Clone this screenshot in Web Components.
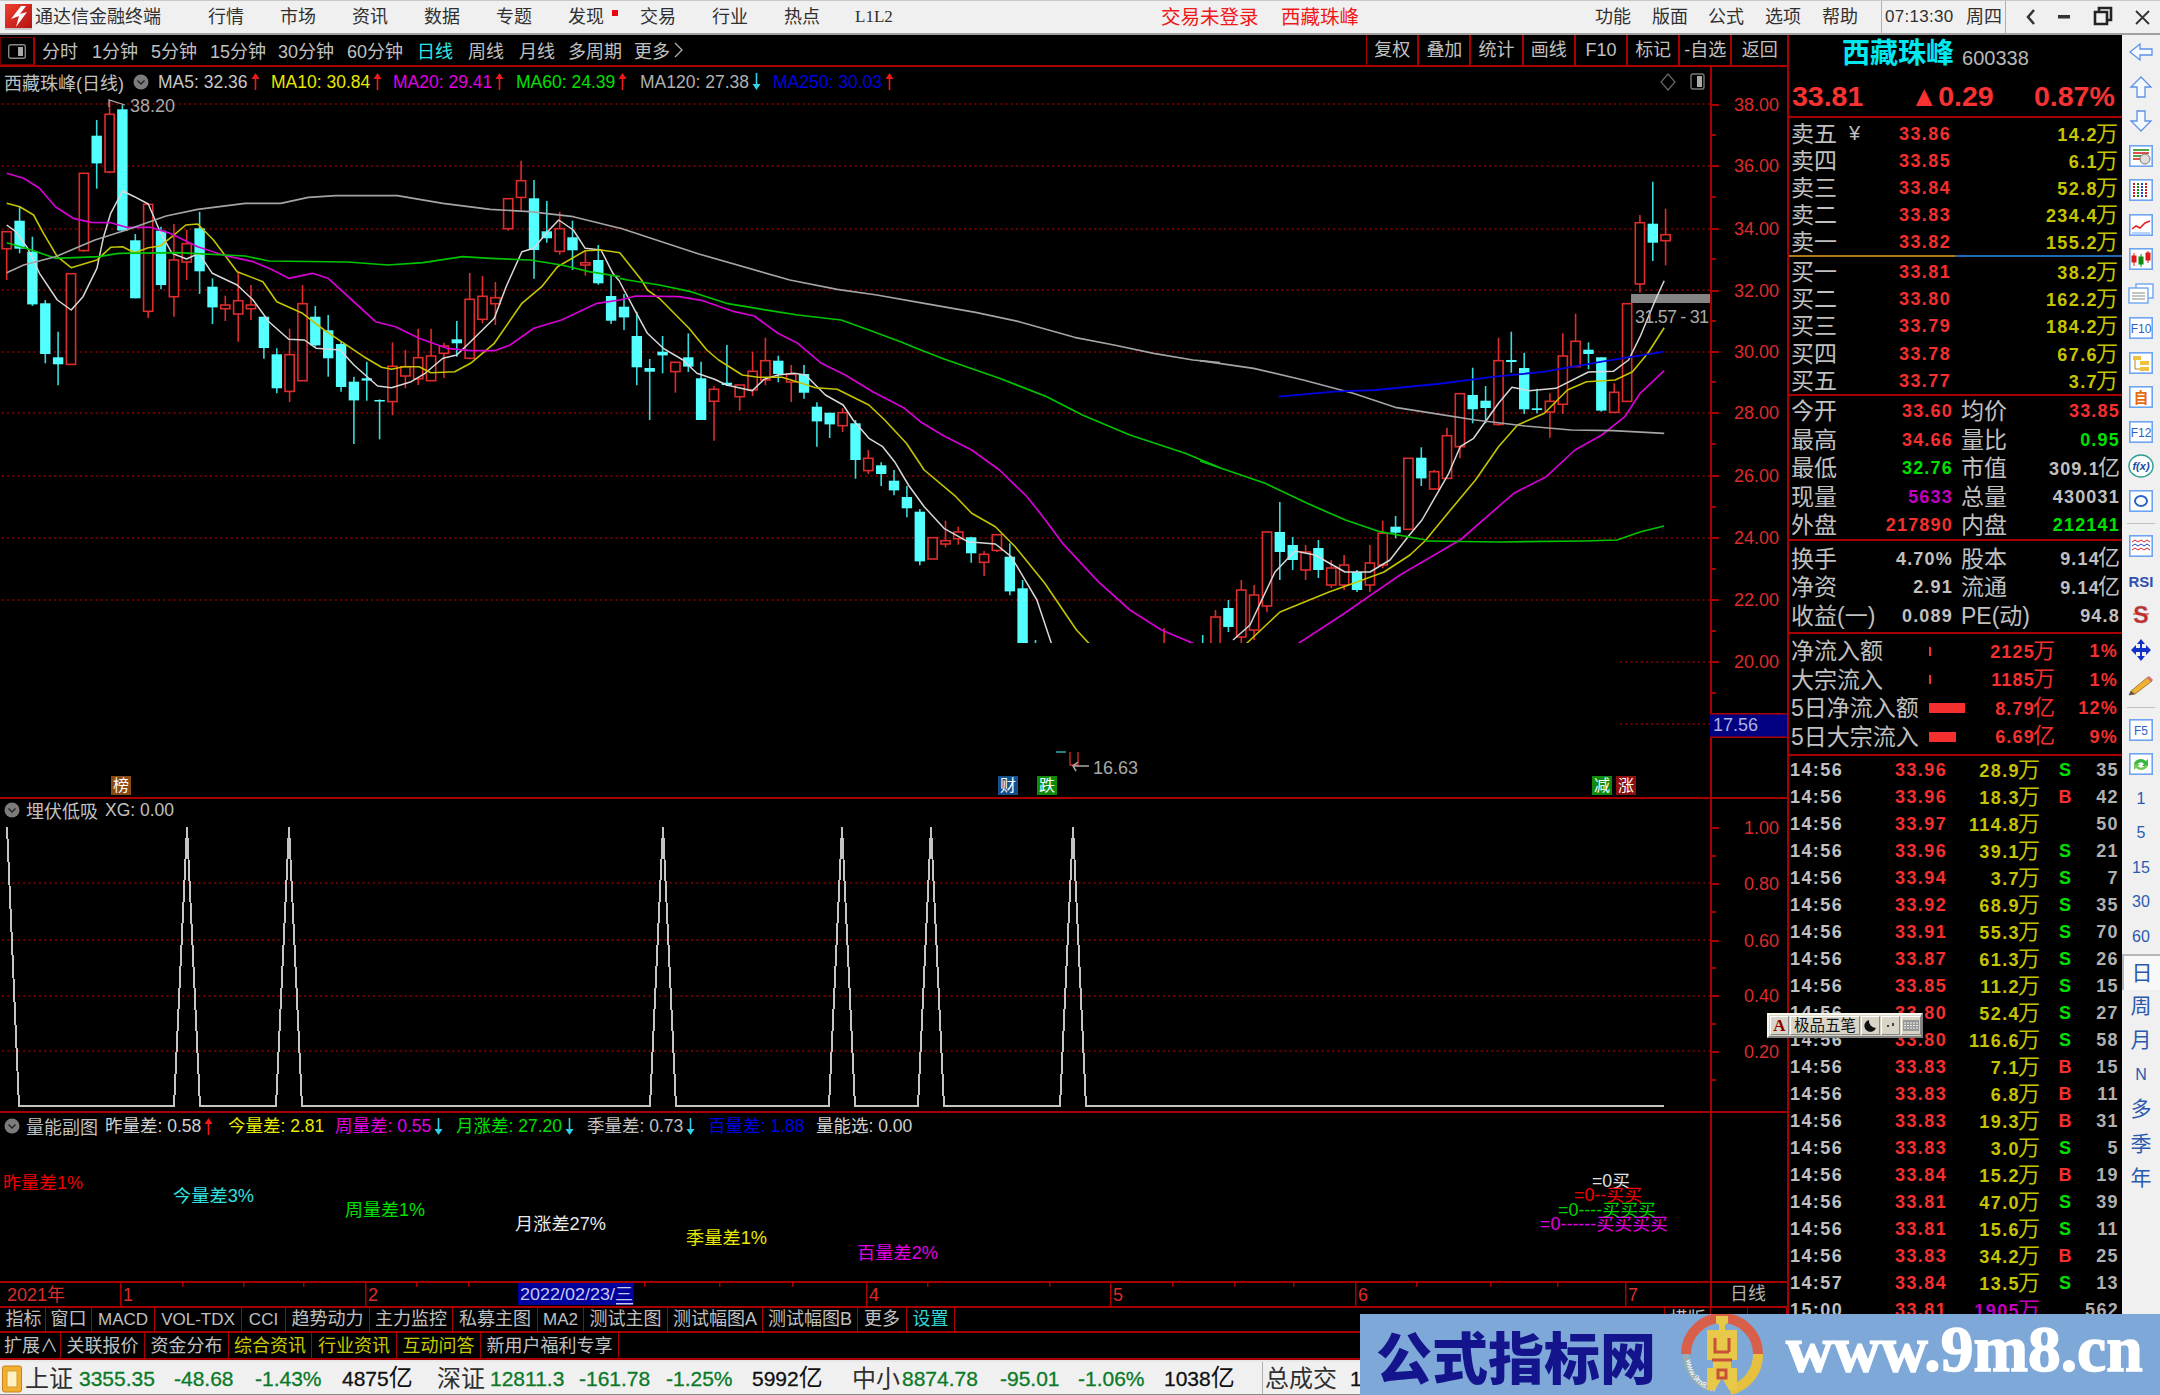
<!DOCTYPE html>
<html lang="zh"><head><meta charset="utf-8"><title>通达信金融终端</title>
<style>
html,body{margin:0;padding:0;background:#000;overflow:hidden}
body{font-family:"Liberation Sans","Noto Sans CJK SC",sans-serif;font-size:18px;color:#c0c0c0}
</style></head>
<body>
<tdx-app>
  <title-bar slot="title"></title-bar>
  <div slot="left" style="display:contents">
    <tool-bar></tool-bar>
    <chart-pane style="--h:732px">
      <info-row slot="head" name="西藏珠峰(日线)" start="4" gap="8" icon="after">
        <ma-val w="113" c="#c8c8c8" a="up">MA5: 32.36</ma-val>
        <ma-val w="122" c="#e8e800" a="up">MA10: 30.84</ma-val>
        <ma-val w="123" c="#e000e0" a="up">MA20: 29.41</ma-val>
        <ma-val w="124" c="#00e000" a="up">MA60: 24.39</ma-val>
        <ma-val w="133" c="#b0b0b0" a="down">MA120: 27.38</ma-val>
        <ma-val w="125" c="#0000e0" a="up">MA250: 30.03</ma-val>
      </info-row>
      <price-plot slot="plot"></price-plot>
      <axis-scale slot="axis" top="67" h="730" labels="105:38.00,166:36.00,229:34.00,291:32.00,352:30.00,413:28.00,476:26.00,538:24.00,600:22.00,662:20.00" minor="135,197,259,321,382,444,507,569,631,693,724"></axis-scale>
    </chart-pane>
    <chart-pane style="--h:314px">
      <info-row slot="head" name="埋伏低吸" start="26" gap="6" icon="before" pad="27" pb="5">
        <ma-val c="#c0c0c0">XG: 0.00</ma-val>
      </info-row>
      <xg-plot slot="plot"></xg-plot>
      <axis-scale slot="axis" top="799" h="312" labels="828:1.00,884:0.80,941:0.60,996:0.40,1052:0.20" minor="856,912,968,1024,1080"></axis-scale>
    </chart-pane>
    <chart-pane style="--h:170px">
      <info-row slot="head" name="量能副图" start="26" gap="6" icon="before" pad="26">
        <ma-val w="123" c="#d0d0d0" a="up">昨量差: 0.58</ma-val>
        <ma-val w="107" c="#e8e800">今量差: 2.81</ma-val>
        <ma-val w="121" c="#e000e0" a="down">周量差: 0.55</ma-val>
        <ma-val w="131" c="#00e000" a="down">月涨差: 27.20</ma-val>
        <ma-val w="121" c="#c0c0c0" a="down">季量差: 0.73</ma-val>
        <ma-val w="108" c="#0000e0">百量差: 1.88</ma-val>
        <ma-val c="#d0d0d0">量能选: 0.00</ma-val>
      </info-row>
      <vol-plot slot="plot"></vol-plot>
      <axis-scale slot="axis" top="1113" h="168" labels="" minor=""></axis-scale>
    </chart-pane>
    <time-axis></time-axis>
    <tab-strip style="--h:25px">
      <tab-cell w="44">指标</tab-cell><tab-cell w="46">窗口</tab-cell><tab-cell w="63">MACD</tab-cell><tab-cell w="87">VOL-TDX</tab-cell><tab-cell w="44">CCI</tab-cell><tab-cell w="84">趋势动力</tab-cell><tab-cell w="83">主力监控</tab-cell><tab-cell w="85">私募主图</tab-cell><tab-cell w="46">MA2</tab-cell><tab-cell w="84">测试主图</tab-cell><tab-cell w="95">测试幅图A</tab-cell><tab-cell w="95">测试幅图B</tab-cell><tab-cell w="49">更多</tab-cell><tab-cell w="48" c="#30d8d8">设置</tab-cell>
      <tab-cell w="47" style="margin-left:auto" first>横版</tab-cell><tab-cell w="37"></tab-cell><tab-cell w="39"></tab-cell>
    </tab-strip>
    <tab-strip style="--h:27px;--pt:2px">
      <tab-cell w="59">扩展∧</tab-cell><tab-cell w="84">关联报价</tab-cell><tab-cell w="84">资金分布</tab-cell><tab-cell w="83" c="#c8c800">综合资讯</tab-cell><tab-cell w="85" c="#c8c800">行业资讯</tab-cell><tab-cell w="84" c="#c8c800">互动问答</tab-cell><tab-cell w="138">新用户福利专享</tab-cell>
    </tab-strip>
  </div>
  <quote-panel slot="quote"></quote-panel>
  <side-rail slot="rail"></side-rail>
  <status-strip slot="status"></status-strip>
  <ime-bar slot="over"></ime-bar>
  <water-mark slot="over"></water-mark>
</tdx-app>
<script>
function def(name,css,html){
  customElements.define(name,class extends HTMLElement{
    connectedCallback(){
      if(this.shadowRoot)return;
      const s=this.attachShadow({mode:'open'});
      s.innerHTML='<style>'+css+'</style>'+(typeof html==='function'?html(this):html);
    }
  });
}
const RED='#a80000';
const chevron='<svg width="16" height="16" viewBox="0 0 16 16" style="display:block;flex:none"><circle cx="8" cy="8" r="7.5" fill="#7c7c7c"/><path d="M4.5 6.5 8 10l3.500-3.500" fill="none" stroke="#222" stroke-width="1.400"/></svg>';

def('tdx-app',`:host{display:grid;position:relative;width:2160px;height:1395px;overflow:hidden;grid-template-columns:1787px 335px 38px;grid-template-rows:35px 1325px 35px;background:#000}
 .t{grid-column:1/4}.l{display:flex;flex-direction:column;min-width:0}.s{grid-column:1/4}`,
 `<div class="t"><slot name="title"></slot></div><div class="l"><slot name="left"></slot></div><div><slot name="quote"></slot></div><div><slot name="rail"></slot></div><div class="s"><slot name="status"></slot></div><slot name="over"></slot>`);

def('title-bar',`:host{display:flex;align-items:center;height:35px;box-sizing:border-box;background:#f0f0f0;border-top:1px solid #c8c8c8;border-bottom:2px solid #a0a0a0;color:#303030;font-size:18px;line-height:24px;white-space:nowrap}
 span{flex:none}.m{width:36px;text-align:center}.g{margin-left:36px}.r{color:#f01818;font-size:19.500px}
 svg{flex:none;display:block}.sep{width:1px;height:33px;background:#b0b0b0;flex:none}`,
 ()=>{
  const ms=['行情','市场','资讯','数据','专题','发现'];
  return `<svg width="27" height="26" viewBox="0 0 27 26" style="margin-left:5px"><defs><linearGradient id="lg" x1="0" y1="0" x2="1" y2="1"><stop offset="0" stop-color="#f04030"/><stop offset="1" stop-color="#b01010"/></linearGradient></defs><rect width="27" height="26" fill="url(#lg)"/><path d="M16 2 6 15l8-3-3 11 11-15-7 2 6-8z" fill="#fff"/><path d="M0 24h27v2H0z" fill="#c8c8c8"/></svg>
  <span style="margin-left:3px;width:173px">通达信金融终端</span>`+
  ms.map((m,i)=>`<span class="m" style="margin-left:${i?36:0}px">${m}</span>`).join('')+
  `<span style="width:6px;height:6px;background:#f00010;margin:-8px 0 0 8px"></span><span class="m" style="margin-left:22px">交易</span><span class="m g">行业</span><span class="m g">热点</span>
  <span style="margin-left:35px;font-size:17px;width:37px;font-family:'Liberation Serif'">L1L2</span>
  <span class="r" style="margin-left:269px;width:120px">交易未登录</span><span class="r">西藏珠峰</span>
  <span class="m" style="margin-left:236px">功能</span><span class="m" style="margin-left:21px">版面</span><span class="m" style="margin-left:20px">公式</span><span class="m" style="margin-left:21px">选项</span><span class="m" style="margin-left:21px">帮助</span>
  <span class="sep" style="margin-left:23px"></span><span style="margin-left:3px;width:78px;font-size:17px;letter-spacing:.3px">07:13:30</span><span class="m" style="margin-left:3px">周四</span><span class="sep" style="margin-left:3px"></span>
  <svg width="157" height="24" viewBox="2 0 157 24"><path d="M30 5 24 12l6 7" fill="none" stroke="#333" stroke-width="2.500"/><rect x="54" y="10" width="12" height="3.500" fill="#333"/><path d="M91 7h12v12H91zM95 7V3h12v12h-4" fill="none" stroke="#222" stroke-width="2.600"/><path d="M132 6l13 13M145 6l-13 13" stroke="#333" stroke-width="1.800"/></svg>`;
 });

def('tool-bar',`:host{display:flex;align-items:center;height:32px;box-sizing:border-box;border-bottom:2px solid ${RED};background:#000;font-size:18px;color:#c0c0c0;white-space:nowrap}
 .box{width:35px;height:28px;margin-top:2px;box-sizing:border-box;border:1px solid #700000;border-right:2px solid ${RED};display:flex;align-items:center;justify-content:center;flex:none}
 span{flex:none}.b{display:flex;height:100%;margin-left:auto;border-left:1px solid ${RED}}.b span{width:52.200px;text-align:center;border-right:2px solid ${RED};box-sizing:border-box;line-height:30px}.b span:last-child{width:54.600px;border-right:0}`,
 ()=>{
  const it=[['分时',42,35],['1分钟',92,45],['5分钟',151,45],['15分钟',210,55],['30分钟',278,55],['60分钟',347,56],['日线',417,36,'#30e8e8'],['周线',468,36],['月线',519,36],['多周期',568,54],['更多',634,36]];
  let h='',p=35;
  it.forEach(a=>{h+=`<span style="margin-left:${a[1]-p}px;width:${a[2]}px;${a[3]?'color:'+a[3]:''}">${a[0]}</span>`;p=a[1]+a[2];});
  h+=`<svg width="14" height="20" viewBox="0 0 14 20" style="margin-left:2px"><path d="M3 3l7 7-7 7" fill="none" stroke="#b0b0b0" stroke-width="1.300"/></svg>`;
  return `<div class="box"><svg width="18" height="15" viewBox="0 0 18 15"><rect x=".7" y=".7" width="16.600" height="13.600" rx="2" fill="none" stroke="#888" stroke-width="1.400"/><rect x="10" y="3" width="5" height="9" fill="#aaa"/></svg></div>`+h+
  `<div class="b">`+['复权','叠加','统计','画线','F10','标记','-自选','返回'].map(t=>`<span>${t}</span>`).join('')+`</div>`;
 });

def('chart-pane',`:host{display:grid;grid-template-columns:1710px 77px;grid-template-rows:auto 1fr;height:var(--h);box-sizing:border-box;border-bottom:2px solid ${RED};background:#000;overflow:hidden}
 .a{grid-column:2;grid-row:1/3;min-height:0}.h{grid-column:1;grid-row:1}.p{grid-column:1;grid-row:2;min-height:0}`,
 `<div class="h"><slot name="head"></slot></div><div class="p"><slot name="plot"></slot></div><div class="a"><slot name="axis"></slot></div>`);

def('info-row',`:host{display:flex;align-items:center;height:29px;box-sizing:border-box;font-size:17.500px;white-space:nowrap;position:relative}
 .n{flex:none;color:#c0c0c0;font-size:18px}::slotted(*){flex:none}`,
 e=>{
  const s=+e.getAttribute('start'),ic=e.getAttribute('icon'),name=e.getAttribute('name');
  if(e.getAttribute('pad'))e.style.height=e.getAttribute('pad')+'px';
  if(e.getAttribute('pb'))e.style.paddingBottom=e.getAttribute('pb')+'px';
  if(ic==='after'){
   return `<span class="n" style="margin-left:${s}px;width:129px">${name}</span>${chevron}<span style="width:9px;flex:none"></span><slot></slot>
   <svg width="50" height="20" viewBox="0 0 50 20" style="position:absolute;left:1655px;top:5px"><path d="M13 2l7 8-7 8-7-8z" fill="none" stroke="#666" stroke-width="1.200"/><rect x="36" y="2" width="13" height="15" rx="2" fill="none" stroke="#777" stroke-width="1.400"/><rect x="42" y="4" width="5" height="11" fill="#aaa"/></svg>`;
  }
  return `<span style="margin-left:4px;flex:none">${chevron}</span><span class="n" style="margin-left:6px;width:79px">${name}</span><slot></slot>`;
 });

def('ma-val',`:host{display:inline-flex;align-items:center;line-height:24px}svg{display:block;margin-left:3px;flex:none}`,
 e=>{
  const c=e.getAttribute('c'),w=e.getAttribute('w'),a=e.getAttribute('a');
  e.style.color=c; if(w)e.style.width=w+'px';
  let ar='';
  if(a==='up')ar=`<svg width="9" height="19" viewBox="0 0 9 19"><path d="M4.500 1 8.500 7H5.300V18H3.700V7H.5z" fill="#f01818"/></svg>`;
  if(a==='down')ar=`<svg width="9" height="19" viewBox="0 0 9 19"><path d="M4.500 18 8.500 12H5.300V1H3.700V12H.5z" fill="#30d0e8"/></svg>`;
  return `<slot></slot>${ar}`;
 });

def('axis-scale',`:host{display:block;height:100%}svg{display:block;overflow:hidden}text{font-size:18px;fill:#dc2c2c}`,
 e=>{
  const top=+e.getAttribute('top'),h=+e.getAttribute('h'),L=e.getAttribute('labels'),M=e.getAttribute('minor');
  let s=`<rect x="0" y="${top}" width="2" height="${h}" fill="${RED}"/>`;
  if(L)L.split(',').forEach(p=>{const[a,b]=p.split(':');s+=`<rect x="2" y="${a-1}" width="7" height="2" fill="${RED}"/><text x="69" y="${a}" text-anchor="end" dominant-baseline="central">${b}</text>`;});
  if(M)M.split(',').forEach(a=>{s+=`<rect x="2" y="${a-1}" width="4" height="2" fill="${RED}"/>`;});
  if(top===67){s+=`<rect x="0" y="713" width="77" height="25" fill="#000080"/><rect x="0" y="713" width="77" height="1.500" fill="${RED}"/><rect x="0" y="736.500" width="77" height="1.500" fill="${RED}"/><text x="3" y="725" dominant-baseline="central" style="fill:#b0b0e8">17.56</text>`;}
  return `<svg width="77" height="${h}" viewBox="0 ${top} 77 ${h}">${s}</svg>`;
 });

/* ---------- price chart ---------- */
function polyPts(a,fx,fy){let o=[];for(let i=0;i<a.length;i+=2)o.push((fx(a[i])).toFixed(1)+','+(fy(a[i+1])).toFixed(1));return o.join(' ');}
const z7x=v=>v/2.529,z7y=v=>90+v/3,z8x=v=>600+v/2.529,z8y=v=>280+v/3,z9x=v=>1200+v/2.613,z9y=v=>160+v/3,id=v=>v;
const Z7=[['r',425,425,476,570],['c',350,392,476,490],['c',440,485,643,648],['c',630,640,792,820],['c',725,802,823,886],['r',551,551,823,823],['r',250,250,482,485],['c',90,137,220,296],['r',30,73,246,250],['c',45,58,422,422],['c',432,451,625,625],['r',343,343,664,684],['c',410,422,585,598],['r',402,510,620,680],['r',420,461,516,570],['c',365,415,544,612],['c',565,590,652,702],['r',617,645,656,693],['r',545,632,672,755],['r',585,645,656,690],['c',680,680,774,806],['c',775,793,895,910],['r',716,794,904,936],['r',585,641,872,872],['c',648,680,766,770],['c',675,721,805,860],['c',755,762,891,905],['c',860,875,931,1062],['c',815,865,872,932],['c',928,930,934,1048],['r',757,829,935,976],['r',780,830,858,895],['r',716,803,866,885],['r',716,798,872,872],['r',758,768,790,864],['c',693,748,760,800],['r',549,628,805,808],['r',558,619,688,700],['r',576,623,641,705],['r',326,326,416,422],['r',212,272,322,360],['c',270,325,480,566],['c',333,424,445,458],['r',365,416,484,494],['c',392,442,481,540],['r',480,518,525,557],['c',465,510,580,584],['c',555,618,692,702]];
const Z8=[['c',42,80,112,150],['c',95,168,262,316],['c',237,264,275,420],['c',168,215,226,280],['r',247,247,275,338],['c',160,232,260,276],['c',245,295,420,420],['r',318,328,364,482],['c',195,308,315,318],['r',315,315,350,392],['r',215,274,330,348],['r',173,242,300,316],['c',227,242,282,307],['r',255,283,306,366],['c',255,282,338,356],['c',367,380,424,500],['c',398,398,433,474],['r',385,398,437,456],['c',420,430,540,596],['r',510,535,572,582],['c',547,556,582,618],['c',570,602,631,646],['c',618,651,685,712],['c',687,695,844,856],['r',773,773,837,837],['r',722,782,792,802],['r',740,756,776,794],['c',770,772,820,848],['r',813,823,847,888],['r',764,764,811,816],['c',790,830,934,946],['c',900,925,1120,1120]];
const MANUAL={80:['c',640,652,652,660],90:['r',628,660,660,660],92:['c',642,660,660,660],93:['c',635,660,660,660],94:['r',610,617,660,660],95:['c',600,608,627,632],96:['r',580,590,637,650],97:['r',585,595,630,640],98:['r',532,532,606,612],99:['c',502,532,552,580],100:['c',537,545,560,570],101:['r',545,552,570,580],102:['c',540,548,570,578],103:['r',560,568,585,588],104:['r',555,565,585,590],105:['c',570,572,590,592],106:['r',545,563,585,592]};
const Z9=[['r',1082,1120,1215,1225],['c',1068,1100,1118,1135],['r',895,895,1108,1108],['c',862,893,955,978],['r',930,935,987,990],['r',803,827,955,955],['r',701,701,860,895],['c',623,705,748,790],['c',678,722,744,790],['r',533,602,793,797],['c',515,600,606,638],['c',578,624,748,762],['c',686,745,750,760],['r',700,724,756,833],['r',520,588,733,762],['r',461,544,620,620],['c',547,569,582,628],['c',592,592,752,755],['r',670,697,757,757],['r',431,431,724,724],['r',165,188,372,398],['c',65,191,248,303],['r',146,224,242,316]];
function cndl(i,d,fy){
  const x=6.7+12.86*i,[k,wt,bt,bb,wb]=d,t=fy(wt),b1=fy(bt),b2=fy(bb),w=fy(wb);
  const col=k==='r'?'#dc2c2c':'#38dcdc';
  let s=`<path d="M${x.toFixed(1)} ${t.toFixed(1)}V${w.toFixed(1)}" stroke="${col}" stroke-width="1.600"/>`;
  if(k==='r')s+=`<rect x="${(x-4.6).toFixed(1)}" y="${b1.toFixed(1)}" width="9.200" height="${Math.max(b2-b1,1).toFixed(1)}" fill="#000" stroke="#dc2c2c" stroke-width="1.600"/>`;
  else s+=`<rect x="${(x-5.2).toFixed(1)}" y="${b1.toFixed(1)}" width="10.400" height="${Math.max(b2-b1,1.500).toFixed(1)}" fill="#54ffff"/>`;
  return s;
}
const MA={
 ma5:[[z7x,z7y,[17,405,40,425,70,475,100,550,145,630,180,660,210,620,245,535,262,440,280,370,310,303,340,320,375,342,405,425,435,490,472,507,503,490,537,550,600,585,640,630,680,695,730,748,770,750,800,775,860,780,895,825,955,888,990,893,1040,875,1075,850,1120,805,1155,795,1190,755,1250,685,1280,590,1320,485,1350,475,1385,425,1413,390,1450,420,1480,475,1520,480,1550,550,1568,575]],
  [z8x,z8y,[50,6,90,95,120,160,160,205,210,240,245,280,290,298,320,315,385,332,415,298,450,285,490,280,520,285,570,345,615,375,640,420,680,475,715,500,745,545,780,615,820,680,870,745,930,785,1000,792,1040,830,1070,890,1105,960,1150,1120]],
  [id,id,[1233,640,1250,625,1275,572,1295,551,1315,555,1345,572,1370,572,1390,560,1407,538]],
  [z9x,z9y,[540,1135,580,1080,650,940,680,860,715,835,780,730,815,682,860,692,930,685,1015,636,1080,634,1120,600,1150,530,1190,420,1213,362]]],
 ma10:[[z7x,z7y,[17,340,50,350,85,375,110,430,145,500,180,533,245,510,280,472,310,470,340,488,375,473,405,468,435,440,470,405,500,402,540,450,600,545,665,575,700,635,765,670,820,720,870,760,920,800,965,832,990,838,1020,830,1060,830,1090,848,1150,845,1190,820,1250,760,1320,640,1370,590,1410,530,1480,482,1520,480,1568,488]],
  [z8x,z8y,[50,-82,105,0,120,30,150,55,225,145,270,210,300,240,360,285,400,292,460,292,510,310,545,323,600,328,680,375,720,420,775,490,820,570,900,650,940,700,1000,740,1050,800,1125,910,1165,980,1205,1050,1260,1120]],
  [id,id,[1240,650,1247,643,1280,612,1329,592,1357,582,1384,572,1410,555,1426,540]],
  [z9x,z9y,[590,1140,640,1070,720,960,780,860,830,795,900,760,960,690,1010,665,1085,660,1130,635,1170,580,1213,503]]],
 ma20:[[z7x,z7y,[17,250,60,265,100,295,140,350,185,385,230,397,280,398,320,412,380,412,430,430,500,470,570,497,640,515,690,540,730,565,790,550,830,565,890,630,950,695,1000,710,1060,745,1130,775,1190,782,1250,782,1290,765,1350,715,1420,690,1510,640,1568,630]],
  [z8x,z8y,[50,60,90,48,200,50,260,62,340,95,390,108,450,160,500,190,560,250,620,285,690,335,770,385,810,425,870,468,940,510,1010,570,1080,650,1120,710,1170,790,1260,905,1340,990,1420,1050,1500,1090,1560,1120]],
  [id,id,[1290,650,1299,643,1342,615,1400,575,1460,540]],
  [z9x,z9y,[680,1140,820,1000,905,950,980,870,1050,825,1110,770,1150,700,1213,632]]],
 ma60:[[z7x,z7y,[17,458,80,480,140,505,250,500,300,490,450,488,620,498,680,513,880,516,980,525,1070,518,1170,500,1240,505,1340,510,1420,525,1490,545,1568,560]],
  [z8x,z8y,[50,-5,70,0,150,15,230,35,320,70,430,92,500,105,610,120,680,150,760,185,800,205,870,237,1010,295,1130,350,1220,405,1340,465,1480,520,1568,563]],
  [z9x,z9y,[0,903,170,970,280,1030,380,1080,470,1115,590,1140]],
  [id,id,[1426,541,1500,542,1584,541,1617,540,1640,532,1664,526]]],
 ma120:[[z7x,z7y,[17,548,60,525,140,500,240,450,320,420,420,378,500,358,620,340,710,340,780,322,850,317,1005,317,1120,340,1240,358,1340,365,1450,380,1568,415]],
  [z8x,z8y,[50,-156,250,-78,480,0,600,28,700,45,820,70,950,97,1060,125,1200,172,1300,195,1400,220,1500,240,1568,248]],
  [z9x,z9y,[0,602,140,625,270,660,400,700,510,742,610,760,720,780,850,798,970,810,1080,812,1213,820]]],
 ma250:[[z9x,z9y,[205,710,350,695,460,690,620,672,770,650,900,635,1050,605,1213,575]]]
};
const MAC={ma5:['#d8d8d8',1.500],ma10:['#c4c400',1.600],ma20:['#d400d4',1.700],ma60:['#00c400',1.700],ma120:['#a4a4a4',1.700],ma250:['#0000e0',1.800]};

def('price-plot',`:host{display:block;height:100%}svg{display:block}text{font-size:18px;fill:#a8a8a8}.w{fill:#fff;font-size:16px}`,
 ()=>{
  let s=`<defs><clipPath id="cp"><rect x="0" y="96" width="1710" height="547"/></clipPath></defs>`;
  [104,166,229,290,352,413,476,538,600].forEach(y=>s+=`<path d="M2 ${y}H1710" stroke="#900000" stroke-width="1.500" stroke-dasharray="2 3.200"/>`);
  [662,724].forEach(y=>s+=`<path d="M1620 ${y}H1710" stroke="#900000" stroke-width="1.500" stroke-dasharray="2 3.200"/>`);
  s+=`<rect x="1631" y="294" width="80" height="9" fill="#848484"/><g clip-path="url(#cp)">`;
  Z7.forEach((d,i)=>s+=cndl(i,d,z7y));
  Z8.forEach((d,i)=>s+=cndl(48+i,d,z8y));
  for(const k in MANUAL)s+=cndl(+k,MANUAL[k],id);
  Z9.forEach((d,i)=>s+=cndl(107+i,d,z9y));
  for(const k in MA){const[c,w]=MAC[k];MA[k].forEach(seg=>{s+=`<polyline points="${polyPts(seg[2],seg[0],seg[1])}" fill="none" stroke="${c}" stroke-width="${w}" stroke-linejoin="round"/>`;});}
  s+=`</g>`;
  s+=`<text x="1635" y="317" dominant-baseline="central" textLength="74">31.57 - 31</text>`;
  s+=`<path d="M109 107V100l16 5" fill="none" stroke="#a8a8a8" stroke-width="1.300"/><text x="130" y="106" dominant-baseline="central">38.20</text>`;
  s+=`<path d="M1056 752h10" stroke="#38c8c8" stroke-width="1.300"/><path d="M1070 752v13h8M1078 752v13" fill="none" stroke="#dc2c2c" stroke-width="1.300"/><path d="M1089 766h-16m5-4-5 4 3 5" fill="none" stroke="#a8a8a8" stroke-width="1.500"/><text x="1093" y="768" dominant-baseline="central">16.63</text>`;
  [[111,'榜','#8a4a14'],[998,'财','#14508c'],[1037,'跌','#0e8a0e'],[1592,'减','#0e8a0e'],[1616,'涨','#8c1010']].forEach(b=>{
    s+=`<rect x="${b[0]}" y="776" width="20" height="19" fill="${b[2]}"/><text class="w" x="${b[0]+10}" y="785.500" text-anchor="middle" dominant-baseline="central">${b[1]}</text>`;
  });
  return `<svg width="1710" height="701" viewBox="0 96 1710 701">${s}</svg>`;
 });

def('xg-plot',`:host{display:block;height:100%}svg{display:block}`,
 ()=>{
  let s='';
  [883,940,996,1051].forEach(y=>s+=`<path d="M2 ${y}H1710" stroke="#900000" stroke-width="1.500" stroke-dasharray="2 3.300"/>`);
  const pk=[187,289,663,842,931,1073];
  let pts=`7,827 19,1106 `;
  pk.forEach(p=>{pts+=`${p-13},1106 ${p},827 ${p+13},1106 `;});
  pts+=`1664,1106`;
  s+=`<polyline points="${pts}" fill="none" stroke="#c4c4c4" stroke-width="2" shape-rendering="crispEdges"/>`;
  return `<svg width="1710" height="285" viewBox="0 826 1710 285">${s}</svg>`;
 });

def('vol-plot',`:host{display:block;height:100%}svg{display:block}text{font-size:17.500px}`,
 ()=>{
  const L=[['昨量差1%',3,1183,'#f00000',80],['今量差3%',173,1196,'#30e0e0',81],['周量差1%',345,1210,'#00e000',80],['月涨差27%',515,1224,'#e8e8e8',91],['季量差1%',686,1238,'#e8e800',81],['百量差2%',857,1253,'#e000e0',81],
   ['=0买',1592,1181,'#e0e0e0',38],['=0--买买',1574,1195,'#f00000',68],['=0----买买买',1558,1210,'#00d000',98],['=0------买买买买',1540,1224,'#e000e0',128]];
  return `<svg width="1710" height="142" viewBox="0 1139 1710 142">`+L.map(a=>`<text x="${a[1]}" y="${a[2]}" fill="${a[3]}" dominant-baseline="central" textLength="${a[4]}" lengthAdjust="spacingAndGlyphs">${a[0]}</text>`).join('')+`</svg>`;
 });

def('time-axis',`:host{display:block;height:25px;box-sizing:border-box;border-bottom:2px solid ${RED};background:#000}svg{display:block}text{font-size:18px;fill:#dc2c2c}`,
 ()=>{
  let s='';
  [182,243,303,416,468,644,719,792,927,1049,1172,1234,1293,1416,1490,1557].forEach(x=>s+=`<rect x="${x}" y="1283" width="1.500" height="4" fill="${RED}"/>`);
  [[120,'1'],[365,'2'],[866,'4'],[1110,'5'],[1355,'6'],[1625,'7']].forEach(a=>s+=`<rect x="${a[0]}" y="1283" width="1.500" height="24" fill="${RED}"/><text x="${a[0]+3}" y="1295" dominant-baseline="central">${a[1]}</text>`);
  s+=`<text x="7" y="1295" dominant-baseline="central">2021年</text>`;
  s+=`<rect x="518" y="1283" width="116" height="22" fill="#00009c"/><text x="520" y="1294" dominant-baseline="central" textLength="113" lengthAdjust="spacingAndGlyphs" style="fill:#c8c8f0;font-size:17px">2022/02/23/三</text><rect x="616" y="1303" width="17" height="1.500" fill="#c8c8f0"/>`;
  s+=`<rect x="1710" y="1283" width="2" height="24" fill="${RED}"/><text x="1730" y="1294" dominant-baseline="central" style="fill:#b0b0b0" textLength="36">日线</text>`;
  return `<svg width="1787" height="23" viewBox="0 1283 1787 23" style="overflow:visible">${s}</svg>`;
 });

def('tab-strip',`:host{display:flex;height:var(--h);box-sizing:border-box;border-bottom:2px solid ${RED};padding-left:2px;background:#000;white-space:nowrap;overflow:hidden}`,`<slot></slot>`);
def('tab-cell',`:host{display:block;flex:none;box-sizing:border-box;border-right:1.500px solid ${RED};font-size:18px;line-height:23px;padding-top:var(--pt,0);text-align:center;color:#c0c0c0;overflow:hidden}`,
 e=>{e.style.width=e.getAttribute('w')+'px';if(e.getAttribute('c'))e.style.color=e.getAttribute('c');if(e.hasAttribute('first'))e.style.borderLeft='1.5px solid '+RED;
  if(e.textContent==='MACD'||e.textContent==='VOL-TDX'||e.textContent==='CCI'||e.textContent==='MA2')e.style.fontSize='17px';return `<slot></slot>`;});

/* ---------- right panel ---------- */
const Y='#c4c400',R='#f52e2e',G='#00e000',W='#c0c0c0',M='#c000c0';
const num=`font-weight:700;letter-spacing:1.400px`;
def('quote-panel',`:host{display:flex;flex-direction:column;height:1325px;box-sizing:border-box;border-left:2px solid ${RED};background:#000;overflow:hidden;white-space:nowrap}
 .head{height:38px;display:flex;align-items:center;flex:none}
 .nm{margin-left:53px;font-size:28px;line-height:38px;font-weight:700;color:#00e8f0}
 .cd{margin-left:8px;font-size:20px;line-height:30px;color:#b8b8b8;padding-top:8px}
 .pr{height:45px;flex:none;border-bottom:2px solid ${RED};display:flex;align-items:center;color:#f83232;font-size:28.500px;font-weight:700;line-height:30px;box-sizing:border-box;padding-top:2px}
 .q{display:grid;grid-template-columns:108px 60px 159px;padding-left:2px;height:27.200px;align-items:center;line-height:27px;font-size:23px}
 .p{color:${R};font-size:18px;${num}}
 .v{text-align:right;color:${Y};font-size:18px;${num};padding-right:0}
 .v i{font:400 22px/22px "Noto Sans CJK SC";letter-spacing:0;margin-left:-2px}
 .mid{height:2px;flex:none;background:linear-gradient(90deg,#b07818 0 50%,#2068b0 50%);margin-bottom:.5px}
 .sec{flex:none;box-sizing:border-box;border-bottom:2px solid ${RED}}
 .g{display:grid;grid-template-columns:162px 8px 159px;padding-left:2px;height:28.500px;align-items:center;font-size:23px;line-height:28px}
 .c{display:flex;justify-content:space-between;align-items:center}
 .n{font-size:18px;${num};letter-spacing:1.200px}
 .n i{font:400 22px/22px "Noto Sans CJK SC";letter-spacing:0;margin-left:-2px}
 .f{display:grid;grid-template-columns:138px 56px 70px 63px;padding-left:2px;height:28.500px;align-items:center;font-size:23px;line-height:28px}
 .f .n{text-align:right}
 .t{display:grid;grid-template-columns:105px 60px 90px 40px 34px;height:27.030px;align-items:center;padding-left:1px;line-height:27px;font-size:18px;${num}}
 .t>*:nth-child(3){text-align:right;padding-right:5px}.t>*:nth-child(4){text-align:center;font-size:18px;letter-spacing:0}.t>*:nth-child(5){text-align:right}
 .t i{font:400 22px/22px "Noto Sans CJK SC";letter-spacing:0;margin-left:-2px}`,
 ()=>{
  const wan=s=>s.replace(/([万亿])/,'<i>$1</i>');
  const q=(a,b,c,ex)=>`<div class="q"><span>${a}${ex||''}</span><span class="p">${b}</span><span class="v">${wan(c)}</span></div>`;
  const g=(a,b,bc,c,d,dc)=>`<div class="g"><div class="c"><span>${a}</span><span class="n" style="color:${bc}">${wan(b)}</span></div><span></span><div class="c"><span>${c}</span><span class="n" style="color:${dc}">${wan(d)}</span></div></div>`;
  const fl=(a,w,h,b,c)=>`<div class="f"><span style="overflow:visible">${a}</span><span style="display:flex;align-items:center"><span style="display:block;width:${w}px;height:${h}px;background:#f52e2e"></span></span><span class="n" style="color:${R}">${wan(b)}</span><span class="n" style="color:${R}">${c}</span></div>`;
  const T=[['14:56','33.96','28.9万','S',35],['14:56','33.96','18.3万','B',42],['14:56','33.97','114.8万','',50],['14:56','33.96','39.1万','S',21],['14:56','33.94','3.7万','S',7],['14:56','33.92','68.9万','S',35],['14:56','33.91','55.3万','S',70],['14:56','33.87','61.3万','S',26],['14:56','33.85','11.2万','S',15],['14:56','33.80','52.4万','S',27],['14:56','33.80','116.6万','S',58],['14:56','33.83','7.1万','B',15],['14:56','33.83','6.8万','B',11],['14:56','33.83','19.3万','B',31],['14:56','33.83','3.0万','S',5],['14:56','33.84','15.2万','B',19],['14:56','33.81','47.0万','S',39],['14:56','33.81','15.6万','S',11],['14:56','33.83','34.2万','B',25],['14:57','33.84','13.5万','S',13],['15:00','33.81','1905万','',562]];
  return `<div class="head"><span class="nm">西藏珠峰</span><span class="cd">600338</span></div>
  <div class="pr"><span style="margin-left:3px;width:118px">33.81</span><span style="width:124px">▲0.29</span><span>0.87%</span></div>
  <div style="height:1.500px;flex:none"></div>
  ${q('卖五','33.86','14.2万','<span style="font-size:20px;margin-left:12px;vertical-align:2px;font-weight:400">¥</span>')}${q('卖四','33.85','6.1万')}${q('卖三','33.84','52.8万')}${q('卖二','33.83','234.4万')}${q('卖一','33.82','155.2万')}
  <div class="mid"></div>
  ${q('买一','33.81','38.2万')}${q('买二','33.80','162.2万')}${q('买三','33.79','184.2万')}${q('买四','33.78','67.6万')}${q('买五','33.77','3.7万')}
  <div style="height:2px;background:${RED};flex:none"></div>
  <div class="sec" style="padding-top:1px">${g('今开','33.60',R,'均价','33.85',R)}${g('最高','34.66',R,'量比','0.95',G)}${g('最低','32.76',G,'市值','309.1亿',W)}${g('现量','5633',M,'总量','430031',W)}${g('外盘','217890',R,'内盘','212141',G)}</div>
  <div class="sec" style="padding-top:3px;padding-bottom:2px">${g('换手','4.70%',W,'股本','9.14亿',W)}${g('净资','2.91',W,'流通','9.14亿',W)}${g('收益(一)','0.089',W,'PE(动)','94.8',W)}</div>
  <div class="sec" style="padding-top:3px;padding-bottom:3px">${fl('净流入额',1.500,9,'2125万','1%')}${fl('大宗流入',1.500,9,'1185万','1%')}${fl('5日净流入额',36,10,'8.79亿','12%')}${fl('5日大宗流入',27,10,'6.69亿','9%')}</div>
  <div>`+T.map(r=>{const mg=r[4]===562;return `<div class="t"><span style="color:${W}">${r[0]}</span><span style="color:${R}">${r[1]}</span><span style="color:${mg?M:Y}">${wan(r[2])}</span><span style="color:${r[3]==='S'?G:R}">${r[3]}</span><span style="color:#b0b0b0">${r[4]}</span></div>`;}).join('')+`</div>`;
 });

/* ---------- side rail ---------- */
def('side-btn',`:host{display:flex;align-items:center;justify-content:center;height:34.500px;flex:none;color:#2a5ab0}svg{display:block}`,`<slot></slot>`);
def('side-rail',`:host{display:flex;flex-direction:column;height:1325px;box-sizing:border-box;background:#f0f0f0;overflow:hidden;width:38px;align-items:center;font-family:"Liberation Sans","Noto Sans CJK SC",sans-serif}
 .sep{height:1px;width:28px;background:#c0c0c0;margin:5px 0;flex:none}
 .nm{font-size:16px;line-height:20px;color:#2a5ab0}.cj{font-size:21px;line-height:24px;color:#2a5ab0}
 .sel{width:38px;box-sizing:border-box;background:#f8f8f8;border-left:2px solid #b8b8b8;border-top:2px solid #b8b8b8;height:36px;display:flex;align-items:center;justify-content:center;margin-bottom:-1.500px}`,
 ()=>{
  const box=i=>`<svg width="24" height="22" viewBox="0 0 24 22"><rect x=".8" y=".8" width="22.400" height="20.400" fill="#fff" stroke="#6ea4f4" stroke-width="1.600"/>${i}</svg>`;
  const ar=d=>`<svg width="28" height="26" viewBox="0 0 28 26"><path d="${d}" fill="#f4f8ff" stroke="#5e90e8" stroke-width="1.300"/></svg>`;
  const tx=t=>box(`<text x="12" y="15.500" text-anchor="middle" font-size="12" fill="#2a62c8">${t}</text>`);
  const lines=(c,y)=>c.map((k,i)=>`<path d="M4 ${y+i*3}h16" stroke="${k}" stroke-width="1.500"/>`).join('');
  const items=[
   ar('M3 13 13 5v5h12v6H13v5z'),ar('M14 3 24 13h-6v10h-8V13H4z'),ar('M14 23 4 13h6V3h8v10h6z'),
   box(lines(['#108a10','#d01818','#108a10','#d01818'],5)+`<circle cx="16" cy="14" r="5" fill="#ddd" stroke="#777"/>`),
   box(`<g stroke-width="2">`+[5,9,13,17].map((x,i)=>`<path d="M${x} 4v14" stroke="${['#d01818','#108a10','#2040c0','#d01818'][i]}" stroke-dasharray="2 1"/>`).join('')+`</g>`),
   box(`<path d="M3 15l4-3 4 2 5-5 5-2" fill="none" stroke="#e02020" stroke-width="1.500"/><path d="M3 19h18" stroke="#6ea4f4"/>`),
   box(`<g stroke="#e01818"><path d="M5 5v13" /><rect x="3" y="8" width="4" height="6" fill="#e01818"/></g><g stroke="#108a10"><path d="M12 6v13"/><rect x="10" y="9" width="4" height="7" fill="#108a10"/></g><g stroke="#e01818"><path d="M19 3v12"/><rect x="17" y="5" width="4" height="7" fill="#e01818"/></g>`),
   `<svg width="26" height="22" viewBox="0 0 26 22"><rect x="8" y="1" width="17" height="14" fill="#fff" stroke="#6ea4f4" stroke-width="1.400"/><rect x="1" y="5" width="19" height="15" fill="#fff" stroke="#6ea4f4" stroke-width="1.400"/><path d="M4 10h13M4 13h13M4 16h13" stroke="#888"/></svg>`,
   tx('F10'),
   box(`<path d="M6 7v10h6" fill="none" stroke="#b08820"/><rect x="4" y="4" width="8" height="4" fill="#f0c040"/><rect x="11" y="9" width="9" height="4" fill="#f0c040"/><rect x="11" y="15" width="9" height="4" fill="#f0c040"/>`),
   box(`<text x="12" y="17" text-anchor="middle" font-size="15" font-weight="700" fill="#e86a10">自</text>`),
   tx('F12'),
   `<svg width="26" height="24" viewBox="0 0 26 24"><ellipse cx="13" cy="12" rx="12" ry="11" fill="#fff" stroke="#30a090" stroke-width="1.500"/><text x="13" y="16" text-anchor="middle" font-size="11" font-style="italic" font-weight="700" fill="#1848a0">f(x)</text></svg>`,
   box(`<ellipse cx="12" cy="11" rx="6" ry="5" fill="none" stroke="#2a62c8" stroke-width="2"/>`),
   'sep',
   box(`<path d="M3 7l3-2 3 2 3-2 3 2 3-2 3 2" fill="none" stroke="#e02020"/><path d="M3 11l3-2 3 2 3-2 3 2 3-2 3 2" fill="none" stroke="#2040c0"/><path d="M3 15l3-2 3 2 3-2 3 2 3-2 3 2" fill="none" stroke="#e02020"/>`),
   `<svg width="28" height="18" viewBox="0 0 28 18"><text x="14" y="15" text-anchor="middle" font-size="15" font-weight="700" fill="#3050b0">RSI</text></svg>`,
   `<svg width="22" height="26" viewBox="0 0 22 26"><text x="11" y="21" text-anchor="middle" font-size="23" font-weight="700" fill="#c82828" stroke="#999" stroke-width=".4">S</text><path d="M3 12h16" stroke="#c82828"/></svg>`,
   `<svg width="26" height="24" viewBox="0 0 26 24"><path d="M13 1l4 5h-3v4h4V7l5 5-5 5v-3h-4v4h3l-4 5-4-5h3v-4H8v3l-5-5 5-5v3h4V6H9z" fill="#1030c8"/></svg>`,
   `<svg width="28" height="24" viewBox="0 0 28 24"><path d="M4 19 21 5l4 4L8 22l-6 1z" fill="#f0b030" stroke="#a08040"/><path d="M21 5l4 4" stroke="#d07070" stroke-width="3"/><path d="M2 23l2-4 4 3z" fill="#555"/></svg>`,
   'sep',tx('F5'),
   box(`<path d="M5 11a7 6 0 0 1 12-3l2-2v7h-6l2-2a4 4 0 0 0-7 1z" fill="#38b840"/><path d="M19 12a7 6 0 0 1-12 3l-2 2v-6h6l-2 2a4 4 0 0 0 7-1z" fill="#78c858"/>`)
  ];
  let h=items.map(i=>i==='sep'?'<div class="sep"></div>':`<side-btn>${i}</side-btn>`).join('');
  h+=['1','5','15','30','60'].map(t=>`<side-btn><span class="nm">${t}</span></side-btn>`).join('');
  h+=`<div class="sel"><span class="cj">日</span></div>`;
  h+=['周','月'].map(t=>`<side-btn><span class="cj">${t}</span></side-btn>`).join('');
  h+=`<side-btn><span class="nm">N</span></side-btn>`;
  h+=['多','季','年'].map(t=>`<side-btn><span class="cj">${t}</span></side-btn>`).join('');
  return h;
 });

/* ---------- status ---------- */
def('status-strip',`:host{display:flex;align-items:center;height:35px;box-sizing:border-box;background:#f0f0f0;border-top:2px solid #e8e8e8;border-bottom:1px solid #888;white-space:nowrap;overflow:hidden;padding-top:1px}
 span{flex:none;font-size:21px;line-height:30px}
 .c{font-size:24px;color:#303030}.g{color:#0a7a28;-webkit-text-stroke:.3px #0a7a28}.k{color:#101010;-webkit-text-stroke:.3px #101010}
 svg{flex:none;display:block}`,
 ()=>{
  const it=[['上证',25,'c'],['3355.35',79,'g'],['-48.68',174,'g'],['-1.43%',255,'g'],['4875亿',342,'k'],['深证',437,'c'],['12811.3',490,'g'],['-161.78',579,'g'],['-1.25%',666,'g'],['5992亿',752,'k'],['中小',852,'c'],['8874.78',902,'g'],['-95.01',1000,'g'],['-1.06%',1078,'g'],['1038亿',1164,'k'],['',1262,''],['总成交',1265,'c'],['1',1350,'k'],['',1400,'']];
  let h=`<svg width="20" height="28" viewBox="0 0 20 28" style="margin-left:2px;margin-right:3px"><rect x=".5" y="1" width="19" height="26" rx="2" fill="#f0b030" stroke="#c88018"/><rect x="5" y="6" width="10" height="16" fill="#fff2c0" stroke="#d89830"/></svg>`;
  it.forEach((a,i)=>{
    if(i===it.length-1)return;
    const w=it[i+1][1]-a[1];
    if(a[0]==='')h+=`<span style="width:${w}px;height:33px;box-sizing:border-box;border-left:1.5px solid #b0b0b0"></span>`;
    else h+=`<span class="${a[2]}" style="width:${w}px">${a[0].replace('亿','<span style="font-size:24px;-webkit-text-stroke:0">亿</span>')}</span>`;
  });
  return h;
 });

def('ime-bar',`:host{position:absolute;left:1767px;top:1013px;width:156px;height:25px;box-sizing:border-box;background:#d8d4c8;border:2px solid;border-color:#f8f8f0 #808080 #808080 #f8f8f0;display:flex;align-items:stretch;gap:1px;padding:1px 1px;color:#101010;font-size:16px;line-height:19px;white-space:nowrap}
 span{display:flex;align-items:center;justify-content:center;flex:none;border:1px solid;border-color:#fff #888 #888 #fff;box-sizing:border-box}`,
 `<span style="width:19px;color:#900000;font-weight:700;font-family:'Liberation Serif';font-size:17px">A</span><span style="width:70px;font-size:15.500px">极品五笔</span>
 <span style="width:19px"><svg width="13" height="13" viewBox="0 0 13 13"><path d="M5 1a6 6 0 1 0 7 8 7 7 0 0 1-7-8z" fill="#111"/></svg></span>
 <span style="width:19px"><svg width="12" height="10" viewBox="0 0 12 10"><circle cx="3" cy="5" r="1" fill="#111"/><path d="M8 2v3" stroke="#111" stroke-width="1.500"/></svg></span>
 <span style="width:20px"><svg width="16" height="11" viewBox="0 0 16 11"><rect width="16" height="11" fill="#999"/><path d="M1 3h14M1 5.500h14M1 8h14" stroke="#eee" stroke-dasharray="2 1"/></svg></span>`);

def('water-mark',`:host{position:absolute;left:1360px;top:1314px;width:800px;height:81px;background:#7ea8d8;display:flex;align-items:center;overflow:hidden;white-space:nowrap}
 .a{margin-left:16px;width:287px;font:900 56px/60px "Noto Sans CJK SC",sans-serif;color:#14148c;flex:none}
 .b{margin-left:123px;font:700 65.500px/70px "Liberation Serif",serif;color:#fff;-webkit-text-stroke:1.500px #fff;flex:none;margin-top:-12px}
 svg{position:absolute;left:320px;top:0}`,
 `<span class="a">公式指标网</span>
 <svg width="84" height="81" viewBox="0 0 84 81"><path d="M6 40A36 36 0 0 1 78 40" fill="none" stroke="#d8604a" stroke-width="10"/><path d="M78 40A36 36 0 0 1 50 76" fill="none" stroke="#e8c040" stroke-width="10"/><path d="M6 40A36 36 0 0 0 34 76" fill="none" stroke="#e8c040" stroke-width="6" opacity=".25"/>
 <path id="arcx" d="M6 46A36 36 0 0 0 36 78" fill="none"/><text font-size="8" fill="#fff" font-family="Liberation Sans"><textPath href="#arcx">www.9m8.cn</textPath></text>
 <path d="M36 2h12v7l-3 2v5h12v30h-6v8h6v22h-8l-7-12-7 12h-8V54h6v-8h-6V16h12v-5l-3-2z" fill="#e8c848"/><path d="M35 24v14h14M49 24v14M32 46h20M38 56h8v8h-8z" fill="none" stroke="#c85038" stroke-width="3"/></svg>
 <span class="b">www.9m8.cn</span>`);
</script>
</body></html>
